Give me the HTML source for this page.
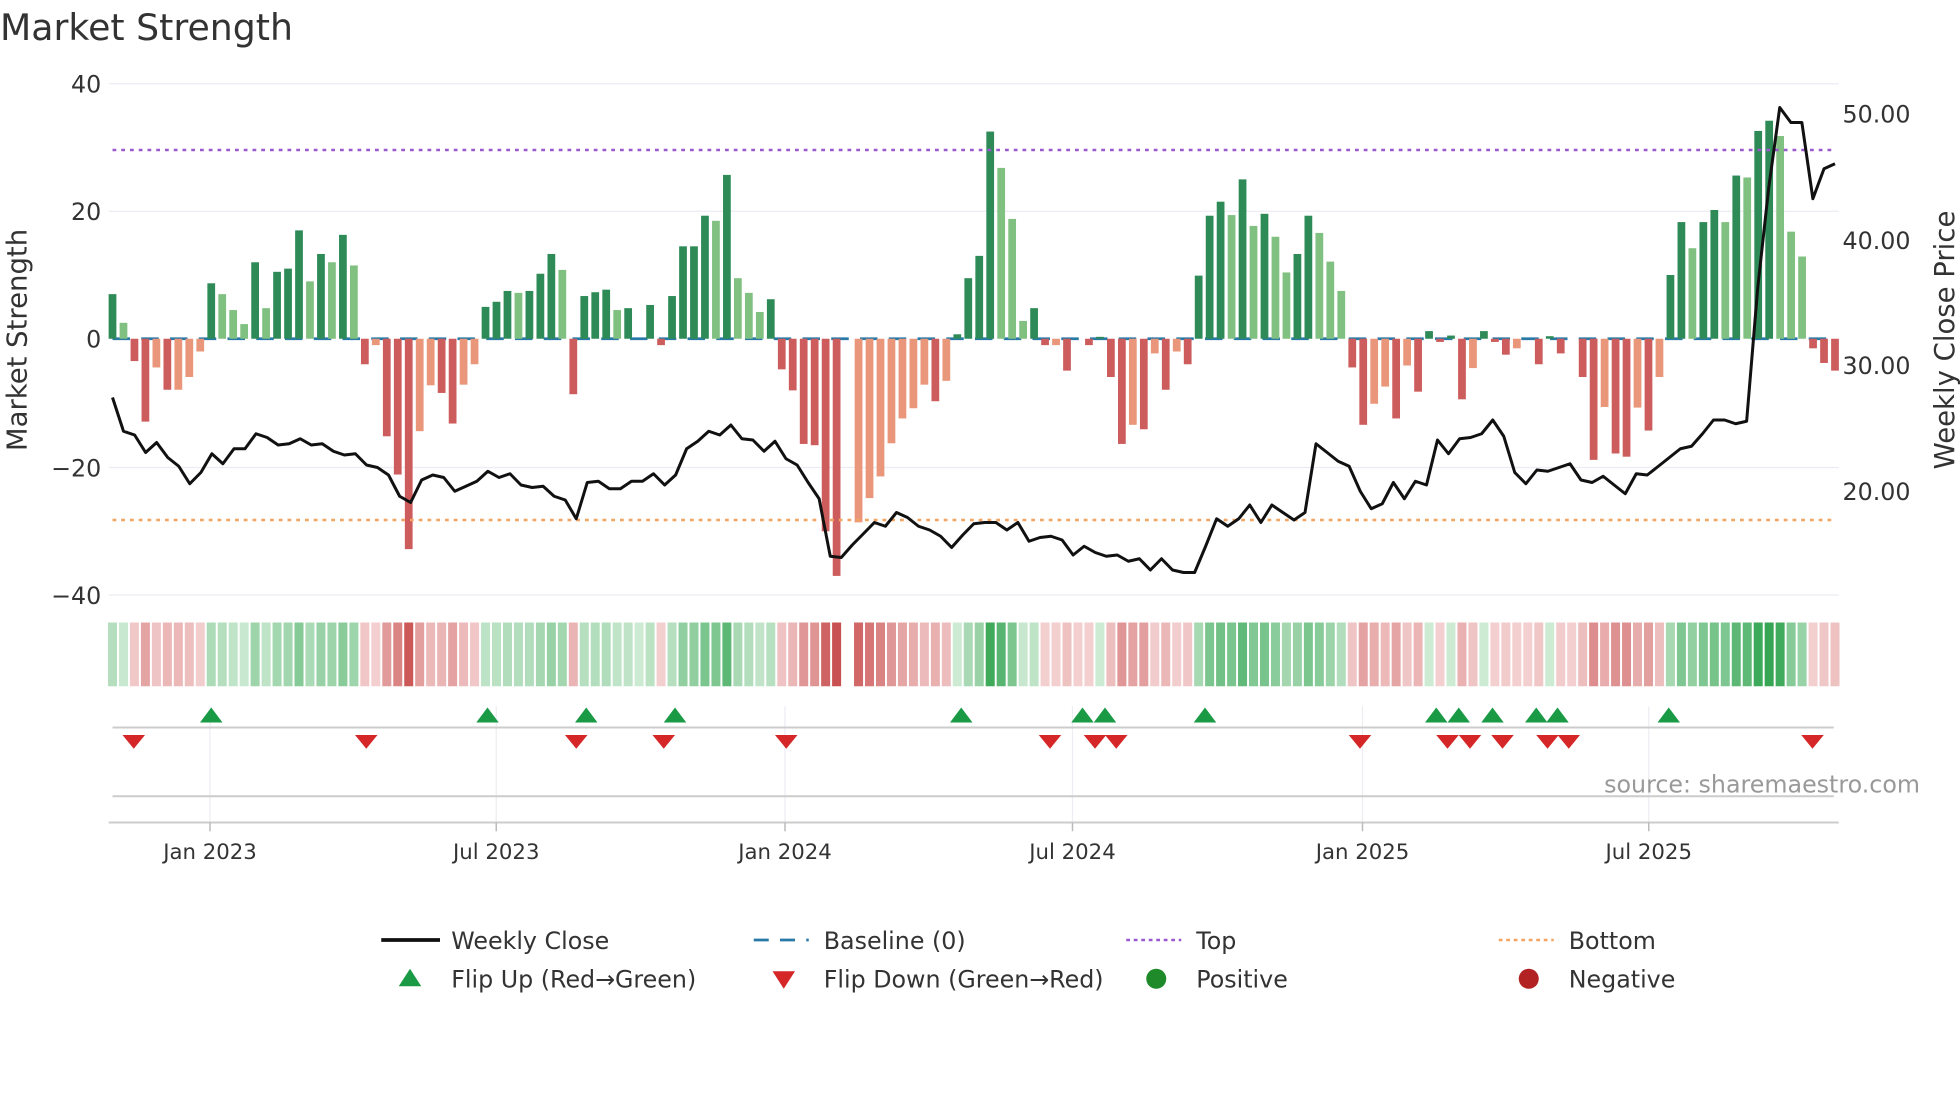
<!DOCTYPE html>
<html><head><meta charset="utf-8"><style>
html,body{margin:0;padding:0;background:#fff;overflow:hidden}
svg{display:block}
text{font-family:"DejaVu Sans","Liberation Sans",sans-serif;fill:#333}
</style></head><body>
<svg id="s" width="1960" height="1102" viewBox="0 0 1568 881.6" xmlns="http://www.w3.org/2000/svg">
<text x="0" y="32" font-size="29">Market Strength</text>
<g stroke="#ececf2" stroke-width="1">
<line x1="87" x2="1471" y1="67" y2="67"/><line x1="87" x2="1471" y1="169" y2="169"/>
<line x1="87" x2="1471" y1="374" y2="374"/><line x1="87" x2="1471" y1="476" y2="476"/>
</g>
<g font-size="19" text-anchor="end">
<text x="81" y="74">40</text><text x="81" y="176">20</text><text x="81" y="278">0</text>
<text x="81" y="381">−20</text><text x="81" y="483">−40</text>
</g>
<g font-size="19">
<text x="1474" y="98">50.00</text><text x="1474" y="199">40.00</text>
<text x="1474" y="299">30.00</text><text x="1474" y="400">20.00</text>
</g>
<text transform="translate(21,272) rotate(-90)" font-size="22" text-anchor="middle">Market Strength</text>
<text transform="translate(1563,272) rotate(-90)" font-size="22" text-anchor="middle">Weekly Close Price</text>
<line x1="90" x2="1468" y1="271" y2="271" stroke="#2878a8" stroke-width="2.2" stroke-dasharray="14 9"/>
<g id="bars"></g>
<line x1="90" x2="1468" y1="120" y2="120" stroke="#9b59d0" stroke-width="2" stroke-dasharray="3 4"/>
<line x1="90" x2="1468" y1="416" y2="416" stroke="#f4a460" stroke-width="2" stroke-dasharray="3 4"/>
<polyline id="price" fill="none" stroke="#111" stroke-width="2.4" stroke-linejoin="round"/>
<g id="heat"></g>
<g stroke="#eceef3" stroke-width="1">
<line x1="168" x2="168" y1="565" y2="658"/><line x1="397" x2="397" y1="565" y2="658"/>
<line x1="628" x2="628" y1="565" y2="658"/><line x1="858" x2="858" y1="565" y2="658"/>
<line x1="1090" x2="1090" y1="565" y2="658"/><line x1="1319" x2="1319" y1="565" y2="658"/>
</g>
<line x1="90" x2="1467" y1="582" y2="582" stroke="#ccc" stroke-width="1.6"/>
<line x1="90" x2="1467" y1="637" y2="637" stroke="#ccc" stroke-width="1.6"/>
<line x1="87" x2="1471" y1="658" y2="658" stroke="#ccc" stroke-width="1.6"/>
<g stroke="#bbb" stroke-width="1.2">
<line x1="168" x2="168" y1="658" y2="665"/><line x1="397" x2="397" y1="658" y2="665"/>
<line x1="628" x2="628" y1="658" y2="665"/><line x1="858" x2="858" y1="658" y2="665"/>
<line x1="1090" x2="1090" y1="658" y2="665"/><line x1="1319" x2="1319" y1="658" y2="665"/>
</g>
<g id="marks"></g>
<text x="1536" y="634" font-size="19" text-anchor="end" style="fill:#999">source: sharemaestro.com</text>
<g font-size="17" text-anchor="middle">
<text x="168" y="687">Jan 2023</text><text x="397" y="687">Jul 2023</text><text x="628" y="687">Jan 2024</text>
<text x="858" y="687">Jul 2024</text><text x="1090" y="687">Jan 2025</text><text x="1319" y="687">Jul 2025</text>
</g>
<g font-size="19">
<line x1="305" x2="352" y1="752" y2="752" stroke="#111" stroke-width="3"/>
<text x="361" y="759">Weekly Close</text>
<line x1="603" x2="647" y1="752" y2="752" stroke="#2878a8" stroke-width="2.2" stroke-dasharray="12 9"/>
<text x="659" y="759">Baseline (0)</text>
<line x1="901" x2="945" y1="752" y2="752" stroke="#9b59d0" stroke-width="2" stroke-dasharray="3 3"/>
<text x="957" y="759">Top</text>
<line x1="1199" x2="1243" y1="752" y2="752" stroke="#f4a460" stroke-width="2" stroke-dasharray="3 3"/>
<text x="1255" y="759">Bottom</text>
<polygon points="319,789 328,775 337,789" fill="#1a9a45"/>
<text x="361" y="790">Flip Up (Red→Green)</text>
<polygon points="618,777 636,777 627,791" fill="#d62728"/>
<text x="659" y="790">Flip Down (Green→Red)</text>
<circle cx="925" cy="783" r="8" fill="#1f8a2a"/>
<text x="957" y="790">Positive</text>
<circle cx="1223" cy="783" r="8" fill="#b22222"/>
<text x="1255" y="790">Negative</text>
</g>
</svg>
<script>
var D="7d,2.5l,-3.5r,-13r,-4.5s,-8r,-8s,-6s,-2s,8.7d,7l,4.5l,2.3l,12d,4.8l,10.5d,11d,17d,9l,13.3d,12l,16.3d,11.5l,-4r,-1s,-15.3r,-21.3r,-33r,-14.5s,-7.3s,-8.5r,-13.3r,-7.2s,-4s,5d,5.8d,7.5d,7.2l,7.5d,10.2d,13.3d,10.8l,-8.7r,6.7d,7.3d,7.7d,4.5l,4.8d,0,5.3d,-1r,6.7d,14.5d,14.5d,19.3d,18.5l,25.7d,9.5l,7.2l,4.2l,6.2d,-4.8r,-8.1r,-16.5r,-16.7r,-30.2r,-37.2r,0,-28.8s,-25s,-21.6s,-16.4s,-12.5s,-10.9s,-7.2s,-9.8r,-6.6s,0.7d,9.5d,13d,32.5d,26.8l,18.8l,2.8l,4.8d,-1r,-1s,-5r,0,-1r,0.3d,-6r,-16.5r,-13.5s,-14.2r,-2.3s,-8r,-2s,-4r,9.9d,19.3d,21.5d,19.4l,25d,17.7l,19.6d,16l,10.4l,13.3d,19.3d,16.6l,12.1l,7.5l,-4.5r,-13.5r,-10.2s,-7.5s,-12.5r,-4.2s,-8.3r,1.2d,-0.5r,0.5d,-9.5r,-4.6s,1.2d,-0.5r,-2.5r,-1.5s,0,-4r,0.4d,-2.3r,0,-6r,-19r,-10.7s,-18r,-18.5r,-10.8s,-14.4r,-6s,10d,18.3d,14.2l,18.3d,20.2d,18.3l,25.6d,25.3l,32.6d,34.2d,31.8l,16.8l,12.9l,-1.5r,-3.8r,-5r".split(",");
var C={d:"#2e8b57",l:"#80c080",r:"#cd5c5c",s:"#e9967a"};
var n=D.length,x0=90,x1=1468,st=(x1-x0)/(n-1);
var b="",h="";
function mix(a,c,t){return "rgb("+a.map(function(v,i){return Math.round(v+(c[i]-v)*t)}).join(",")+")"}
for(var i=0;i<n;i++){var s=D[i],v=parseFloat(s),k=s.slice(-1),x=x0+i*st;
 if(v!==0&&C[k]){var y=271-v*5.1;b+='<rect x="'+(x-3.1)+'" y="'+Math.min(y,271)+'" width="6.2" height="'+Math.abs(v*5.1)+'" fill="'+C[k]+'"/>';}
 if(Math.abs(x-681)<3)continue;
 var t=Math.min(Math.abs(v)/35,1),col;
 if(v>0||(v===0&&i>0&&parseFloat(D[i-1])>0))col=mix([212,237,217],[65,171,93],Math.max(t*1.1,0.05));
 else col=mix([245,213,213],[205,92,92],Math.max(t*1.1,0.05));
 h+='<rect x="'+(x-3.6)+'" y="498" width="7.2" height="51" fill="'+col+'"/>';}
document.getElementById("bars").innerHTML=b;
document.getElementById("heat").innerHTML=h;
var P=[318,345,348,362,354,366,373,387,378,363,371,359,359,347,350,356,355,351,356,355,361,364,363,372,374,380,397,402,384,380,382,393,389,385,377,382,379,388,390,389,397,400,415,386,385,391,391,385,385,379,388,380,359,353,345,348,340,351,352,361,353,367,372,386,399,445,446,436,427,418,421,410,414,421,424,429,438,428,419,418,418,424,418,433,430,429,432,444,437,442,445,444,449,447,456,447,456,458,458,437,415,421,415,404,418,404,410,416,410,355,362,369,373,393,407,403,386,399,385,388,352,363,351,350,347,336,349,378,387,376,377,374,371,384,386,381,388,395,379,380,373,366,359,357,347,336,336,339,337,230,150,86,98,98,159,135,131];
var ps=(x1-x0)/(P.length-1);
document.getElementById("price").setAttribute("points",P.map(function(y,i){return (x0+i*ps).toFixed(1)+","+y}).join(" "));
var up=[169,390,469,540,769,866,884,964,1149,1167,1194,1229,1246,1335],dn=[107,293,461,531,629,840,876,893,1088,1158,1176,1202,1238,1255,1450],m="";
up.forEach(function(x){m+='<polygon points="'+(x-9)+',578 '+x+',566 '+(x+9)+',578" fill="#1a9a45"/>'});
dn.forEach(function(x){m+='<polygon points="'+(x-9)+',588 '+(x+9)+',588 '+x+',599" fill="#d62728"/>'});
document.getElementById("marks").innerHTML=m;
</script>
</body></html>
